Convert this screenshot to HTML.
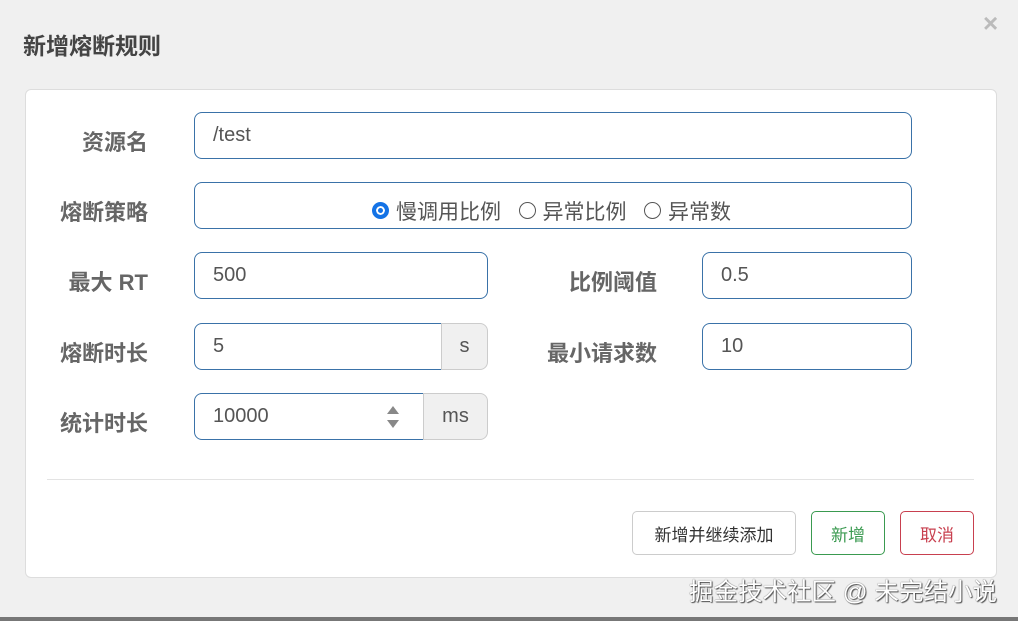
<!DOCTYPE html>
<html><head><meta charset="utf-8"><style>
*{box-sizing:border-box;margin:0;padding:0}
body{width:1018px;height:621px;background:#f0f0f0;position:relative;overflow:hidden;font-family:"Liberation Sans","Noto Sans CJK SC",sans-serif}
.a{position:absolute}
.title{left:23px;top:27px;font-size:23px;font-weight:bold;color:#444}
.x{left:983px;top:8px;font-size:26px;color:#bbb;font-weight:bold}
.card{left:25px;top:89px;width:972px;height:489px;background:#fff;border:1px solid #ddd;border-radius:6px}
.lbl{font-size:22px;font-weight:bold;color:#666;text-align:right;width:125px}
.in{border:1px solid #3a72a8;border-radius:8px;height:47px;font-size:20px;color:#555;padding:11px 18px;background:#fff}
.add{border:1px solid #ccc;background:#f0f0f0;font-size:20px;color:#555;display:flex;align-items:center;justify-content:center;height:47px}
.btn{border-radius:5px;height:44px;font-size:17px;display:flex;align-items:center;justify-content:center;background:#fff}
.r{display:inline-block;width:17px;height:17px;border:1.5px solid #555;border-radius:50%;vertical-align:0px;margin-right:7px}
</style></head><body>
<div class="a title">新增熔断规则</div>
<div class="a x">×</div>
<div class="a card"></div>
<div class="a lbl" style="left:23px;top:125px">资源名</div>
<div class="a in" style="left:194px;top:112px;width:718px">/test</div>
<div class="a lbl" style="left:23px;top:195px">熔断策略</div>
<div class="a in" style="left:194px;top:182px;width:718px;padding:13px 0 0 177px;font-size:21px;white-space:nowrap">
<span class="r" style="border:4px solid #1473e6;background:#1473e6;box-shadow:inset 0 0 0 2px #fff"></span>慢调用比例&nbsp;&nbsp;&nbsp;<span class="r"></span>异常比例&nbsp;&nbsp;&nbsp;<span class="r"></span>异常数</div>
<div class="a lbl" style="left:23px;top:265px">最大 RT</div>
<div class="a in" style="left:194px;top:252px;width:294px">500</div>
<div class="a lbl" style="left:532px;top:265px">比例阈值</div>
<div class="a in" style="left:702px;top:252px;width:210px">0.5</div>
<div class="a lbl" style="left:23px;top:336px">熔断时长</div>
<div class="a in" style="left:194px;top:323px;width:248px;border-radius:8px 0 0 8px">5</div>
<div class="a add" style="left:441px;top:323px;width:47px;border-radius:0 8px 8px 0">s</div>
<div class="a lbl" style="left:532px;top:336px">最小请求数</div>
<div class="a in" style="left:702px;top:323px;width:210px">10</div>
<div class="a lbl" style="left:23px;top:406px">统计时长</div>
<div class="a in" style="left:194px;top:393px;width:230px;border-radius:8px 0 0 8px">10000</div>
<div class="a" style="left:387px;top:406px;width:0;height:0;border-left:6px solid transparent;border-right:6px solid transparent;border-bottom:8px solid #888"></div>
<div class="a" style="left:387px;top:420px;width:0;height:0;border-left:6px solid transparent;border-right:6px solid transparent;border-top:8px solid #888"></div>
<div class="a add" style="left:423px;top:393px;width:65px;border-radius:0 8px 8px 0">ms</div>
<div class="a" style="left:47px;top:479px;width:927px;height:1px;background:#e3e3e3"></div>
<div class="a btn" style="left:632px;top:511px;width:164px;border:1px solid #ccc;color:#333">新增并继续添加</div>
<div class="a btn" style="left:811px;top:511px;width:74px;border:1px solid #3a9a50;color:#3a9a50">新增</div>
<div class="a btn" style="left:900px;top:511px;width:74px;border:1px solid #c8404f;color:#c8404f">取消</div>
<div class="a" style="left:689px;top:573px;font-size:24.5px;color:#fff;white-space:nowrap;text-shadow:0 0 1px #333,1px 1px 1px #555">掘金技术社区 @ 未完结小说</div>
<div class="a" style="left:0;top:617px;width:1018px;height:4px;background:#777"></div>
</body></html>
